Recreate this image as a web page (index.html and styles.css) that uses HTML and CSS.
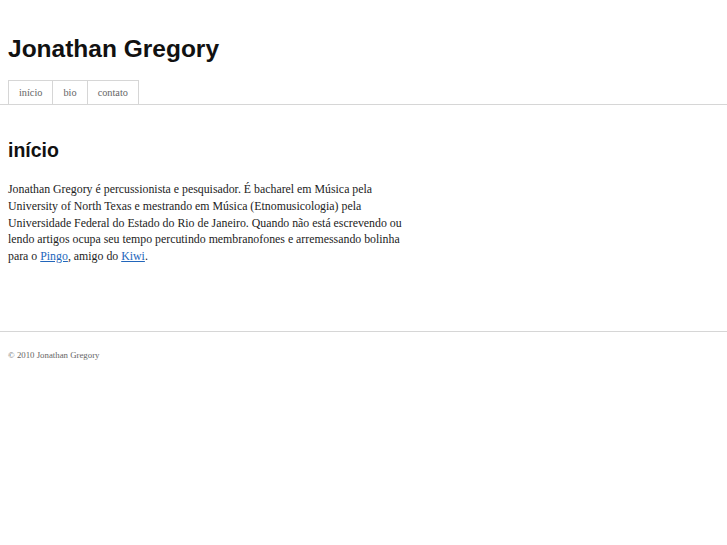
FILE: index.html
```html
<!DOCTYPE html>
<html lang="pt-br">
<head>
    <meta charset="UTF-8">
    <title>Jonathan Gregory</title>
    <link rel="stylesheet" href="styles.css">
</head>
<body>
    <div class="header">
        <h1 class="site-title">Jonathan Gregory</h1>
        <ul class="tabs">
            <li class="active"><a href="#">início</a></li>
            <li><a href="#">bio</a></li>
            <li><a href="#">contato</a></li>
        </ul>
    </div>

    <div class="content">
        <h2>início</h2>
        <p>Jonathan Gregory é percussionista e pesquisador. É bacharel em Música pela University of North Texas e mestrando em Música (Etnomusicologia) pela Universidade Federal do Estado do Rio de Janeiro. Quando não está escrevendo ou lendo artigos ocupa seu tempo percutindo membranofones e arremessando bolinha para o <a href="#">Pingo</a>, amigo do <a href="#">Kiwi</a>.</p>
    </div>

    <div class="footer">
        <p>© 2010 Jonathan Gregory</p>
    </div>
</body>
</html>
```

FILE: styles.css
```css
body {
    margin: 0;
    padding: 0;
    font-family: "Liberation Serif", serif;
    color: #222;
    background: #fff;
}
.header {
    padding-top: 35px;
    border-bottom: 1px solid #d6d6d6;
}
.site-title {
    font-family: "Liberation Sans", Arial, sans-serif;
    font-size: 24.5px;
    font-weight: bold;
    color: #111;
    margin: 0 0 17px 8px;
    line-height: 28px;
}
.tabs {
    list-style: none;
    margin: 0 0 0 8px;
    padding: 0;
    display: flex;
}
.tabs li {
    border: 1px solid #d6d6d6;
    border-bottom: none;
    margin-right: -1px;
}
.tabs li a {
    display: block;
    padding: 0 10px;
    height: 23px;
    line-height: 23px;
    font-size: 10.3px;
    color: #666;
    text-decoration: none;
}
.content {
    padding: 0 8px;
    width: 402px;
    height: 226px;
}
.content h2 {
    font-family: "Liberation Sans", Arial, sans-serif;
    font-size: 19.5px;
    font-weight: bold;
    color: #111;
    margin: 0;
    padding-top: 33px;
    line-height: 24px;
}
.content p {
    font-size: 11.85px;
    line-height: 16.75px;
    margin: 19px 0 0;
    color: #222;
}
.content a {
    color: #2266bb;
}
.footer {
    border-top: 1px solid #d6d6d6;
    padding: 0 8px;
}
.footer p {
    font-size: 8.8px;
    color: #666;
    margin: 18px 0 0;
}
```
